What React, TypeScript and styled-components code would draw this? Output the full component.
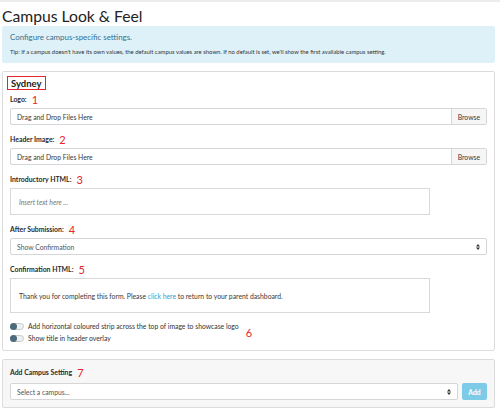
import styled, { createGlobalStyle } from "styled-components";

const GlobalStyle = createGlobalStyle`
    * { box-sizing: border-box; }
    body {
        margin: 0;
        background: #fff;
        font-family: Lato, "Open Sans", "Liberation Sans", sans-serif;
        color: #333;
    }
`;

const Page = styled.div`
    width: 500px;
    border-top: 2px solid #ececec;
    padding: 0 5px 0 2px;
`;

const Title = styled.h1`
    margin: 0;
    height: 24px;
    padding-top: 6px;
    font-size: 15.7px;
    font-weight: 400;
    line-height: 17px;
    color: #222;
`;

const Alert = styled.div`
    height: 37px;
    background: #dff1f8;
    border-radius: 2px;
    padding: 6px 8px 0;
    margin-bottom: 8px;
`;

const AlertLead = styled.div`
    font-size: 7.9px;
    line-height: 11px;
    color: #31708f;
    margin-bottom: 4px;
`;

const AlertTip = styled.div`
    font-size: 5.9px;
    line-height: 9px;
    color: #333;
`;

const Card = styled.div<{ $muted?: boolean }>`
    border: 1px solid #dcdcdc;
    border-radius: 2px;
    background: ${(p) => (p.$muted ? "#f7f7f7" : "#fff")};
    padding: ${(p) => (p.$muted ? "6px 7px 7px" : "4px 7px 6px")};
    margin-bottom: 8px;
`;

const CampusName = styled.div`
    display: flex;
    align-items: center;
    width: fit-content;
    margin: 0 0 3px -3px;
    height: 14px;
    padding: 0 3px;
    border: 1.5px solid #e8242b;
    font-size: 9.5px;
    font-weight: 700;
    color: #222;
`;

const Group = styled.div`
    margin-bottom: 8px;
`;

const Label = styled.div<{ $gap?: number }>`
    display: flex;
    align-items: center;
    height: 12px;
    margin-bottom: ${(p) => p.$gap ?? 3}px;
    font-size: 6.9px;
    font-weight: 700;
    color: #2a2a2a;
`;

const Marker = styled.span`
    margin-left: 5px;
    font-size: 11px;
    font-weight: 400;
    color: #e8242b;
`;

const FileInput = styled.div`
    display: flex;
    height: 17px;
    border: 1px solid #d6d6d6;
    border-radius: 2px;
    font-size: 6.8px;
    color: #3a3a3a;
`;

const FileText = styled.div`
    flex: 1;
    display: flex;
    align-items: center;
    padding-left: 6px;
`;

const Browse = styled.div`
    display: flex;
    align-items: center;
    padding: 0 6px;
    border-left: 1px solid #d6d6d6;
    background: #f6f6f6;
`;

const Editor = styled.div<{ $h: number }>`
    width: 420px;
    height: ${(p) => p.$h}px;
    border: 1px solid #d9d9d9;
    padding: 0 8px;
    display: flex;
    align-items: center;
    font-size: 6.8px;
    color: #3a3a3a;
`;

const Placeholder = styled.span`
    font-style: italic;
    color: #777;
`;

const Link = styled.span`
    color: #2ba3d8;
`;

const Select = styled.div`
    flex: 1;
    display: flex;
    align-items: center;
    justify-content: space-between;
    height: 17px;
    border: 1px solid #d6d6d6;
    border-radius: 2px;
    padding: 0 6px;
    font-size: 6.8px;
    color: #555;
    background: #fff;
`;

const Toggles = styled.div`
    display: flex;
    align-items: center;
    gap: 2px;
    margin-top: 7px;
`;

const ToggleList = styled.div`
    display: flex;
    flex-direction: column;
`;

const ToggleRow = styled.div`
    display: flex;
    align-items: center;
    height: 12px;
    font-size: 6.8px;
    color: #333;
`;

const Switch = styled.span`
    position: relative;
    width: 14px;
    height: 7px;
    margin-right: 4px;
    border: 1px solid #c9c9c9;
    border-radius: 4px;
    background: #eef0f2;
    &::after {
        content: "";
        position: absolute;
        left: -1px;
        top: -1px;
        width: 7px;
        height: 7px;
        border-radius: 50%;
        background: #4d6b7b;
    }
`;

const Row = styled.div`
    display: flex;
    gap: 4px;
`;

const AddButton = styled.button`
    width: 25px;
    height: 17px;
    border: none;
    border-radius: 2px;
    background: #7ecbe8;
    color: #fff;
    font-family: inherit;
    font-size: 6.8px;
    font-weight: 700;
    padding: 0;
`;

function Arrows() {
    return (
        <svg width="4" height="6" viewBox="0 0 4 6">
            <path d="M2 0 L4 2.4 H0 Z M2 6 L0 3.6 H4 Z" fill="#333" />
        </svg>
    );
}

export default function App() {
    return (
        <>
            <GlobalStyle />
            <Page>
                <Title>Campus Look &amp; Feel</Title>
                <Alert>
                    <AlertLead>Configure campus-specific settings.</AlertLead>
                    <AlertTip>
                        Tip: If a campus doesn't have its own values, the default campus values are shown. If no default is set, we'll show the first available campus setting.
                    </AlertTip>
                </Alert>

                <Card>
                    <CampusName>Sydney</CampusName>
                    <Group>
                        <Label>Logo:<Marker>1</Marker></Label>
                        <FileInput>
                            <FileText>Drag and Drop Files Here</FileText>
                            <Browse>Browse</Browse>
                        </FileInput>
                    </Group>
                    <Group>
                        <Label>Header Image:<Marker>2</Marker></Label>
                        <FileInput>
                            <FileText>Drag and Drop Files Here</FileText>
                            <Browse>Browse</Browse>
                        </FileInput>
                    </Group>
                    <Group>
                        <Label>Introductory HTML:<Marker>3</Marker></Label>
                        <Editor $h={27}>
                            <Placeholder>Insert text here ...</Placeholder>
                        </Editor>
                    </Group>
                    <Group>
                        <Label>After Submission:<Marker>4</Marker></Label>
                        <Row>
                            <Select>
                                Show Confirmation
                                <Arrows />
                            </Select>
                        </Row>
                    </Group>
                    <div>
                        <Label>Confirmation HTML:<Marker>5</Marker></Label>
                        <Editor $h={35}>
                            <span>
                                Thank you for completing this form. Please <Link>click here</Link> to return to your parent dashboard.
                            </span>
                        </Editor>
                    </div>
                    <Toggles>
                        <ToggleList>
                            <ToggleRow>
                                <Switch />
                                Add horizontal coloured strip across the top of image to showcase logo
                            </ToggleRow>
                            <ToggleRow>
                                <Switch />
                                Show title in header overlay
                            </ToggleRow>
                        </ToggleList>
                        <Marker>6</Marker>
                    </Toggles>
                </Card>

                <Card $muted>
                    <Label $gap={5}>Add Campus Setting<Marker>7</Marker></Label>
                    <Row>
                        <Select>
                            Select a campus...
                            <Arrows />
                        </Select>
                        <AddButton>Add</AddButton>
                    </Row>
                </Card>
            </Page>
        </>
    );
}
